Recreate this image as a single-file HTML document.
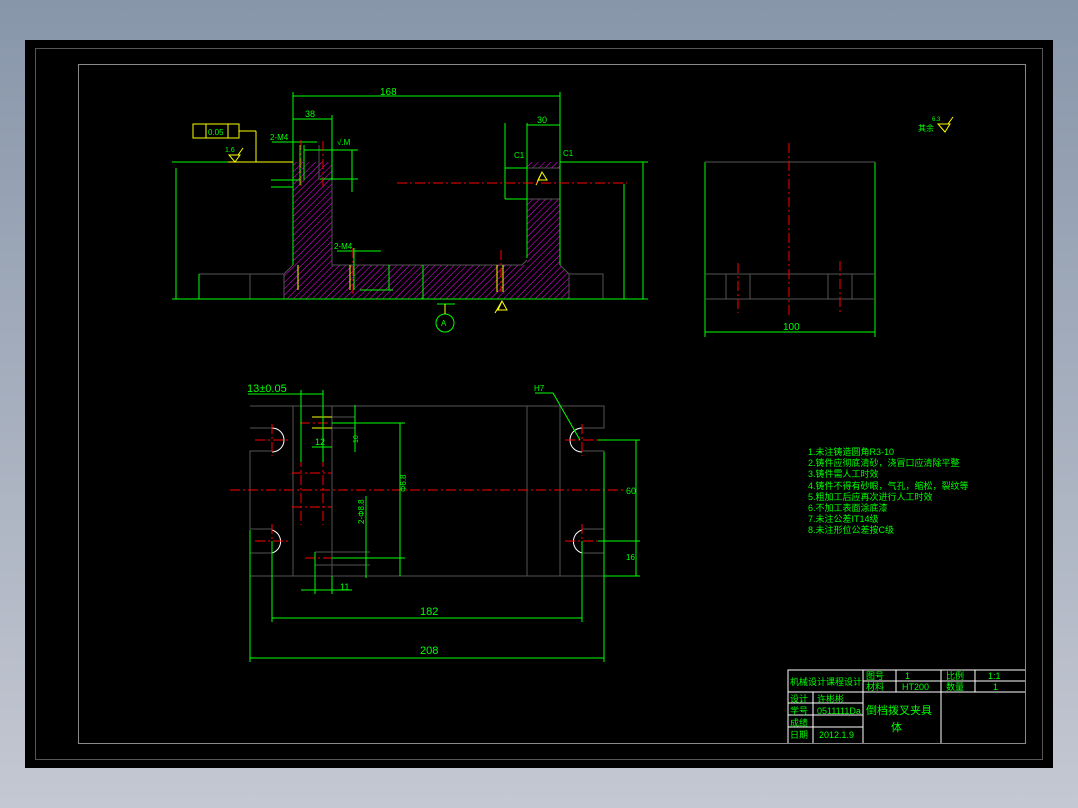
<!DOCTYPE html>
<html><head><meta charset="utf-8"><style>
html,body{margin:0;padding:0;width:1078px;height:808px;overflow:hidden;background:linear-gradient(#8896aa,#c4c8d2);}
svg{position:absolute;left:0;top:0;}
text{font-family:"Liberation Sans","Noto Sans CJK SC",sans-serif;fill:#00ff00;}
</style></head><body>
<svg width="1078" height="808" viewBox="0 0 1078 808">
<defs>
<pattern id="h" patternUnits="userSpaceOnUse" width="4.5" height="4.5" patternTransform="rotate(45)">
<line x1="0" y1="0" x2="0" y2="4.5" stroke="#ff00ff" stroke-width="1"/>
</pattern>
</defs>
<rect x="25" y="40" width="1028" height="728" fill="#000"/>
<rect x="35.5" y="48.5" width="1007" height="711" fill="none" stroke="#555" stroke-width="1"/>
<rect x="78.5" y="64.5" width="947" height="679" fill="none" stroke="#888" stroke-width="1"/>

<!-- FRONT VIEW -->
<g>
<path d="M293 162 H332 V265 H527 V199 H560 V265 L569 274 V299 H284 V274 L293 265 Z" fill="url(#h)"/>
<rect x="527" y="162" width="33" height="6" fill="url(#h)"/>
<g stroke="#555" fill="none" stroke-width="1">
<path d="M332 168 V265 H522 L527 260"/>
<path d="M560 265 L569 274 H603 V299"/>
<path d="M293 265 L284 274 H199"/>
<line x1="250" y1="274" x2="250" y2="299"/>
<line x1="569" y1="274" x2="569" y2="299"/>
<line x1="284" y1="274" x2="284" y2="299"/>
<line x1="527" y1="168" x2="560" y2="168"/>
<line x1="527" y1="199" x2="560" y2="199"/>
<line x1="319" y1="145" x2="319" y2="180"/>
</g>
<g stroke="#00ff00" fill="none" stroke-width="1">
<line x1="172" y1="162" x2="293" y2="162"/>
<line x1="560" y1="162" x2="648" y2="162"/>
<line x1="172" y1="299" x2="648" y2="299"/>
<line x1="293" y1="92" x2="293" y2="265"/>
<line x1="560" y1="92" x2="560" y2="265"/>
<line x1="527" y1="123" x2="527" y2="258"/>
<line x1="293" y1="96" x2="560" y2="96"/>
<line x1="293" y1="119" x2="332" y2="119"/>
<line x1="332" y1="115" x2="332" y2="180"/>
<line x1="527" y1="125" x2="560" y2="125"/>
<line x1="176" y1="168" x2="176" y2="299"/>
<line x1="643" y1="162" x2="643" y2="299"/>
<line x1="624" y1="184" x2="624" y2="299"/>
<line x1="199" y1="274" x2="199" y2="299"/>
<line x1="271" y1="187" x2="293" y2="187"/>
<line x1="271" y1="180" x2="300" y2="180"/>
<line x1="272" y1="142" x2="317" y2="142"/>
<line x1="304" y1="150" x2="358" y2="150"/>
<line x1="320" y1="179" x2="358" y2="179"/>
<line x1="352" y1="150" x2="352" y2="192"/>
<line x1="505" y1="168" x2="527" y2="168"/>
<line x1="505" y1="199" x2="527" y2="199"/>
<line x1="505" y1="123" x2="505" y2="199"/>
<line x1="337" y1="251" x2="381" y2="251"/>
<line x1="360" y1="290" x2="393" y2="290"/>
<line x1="389" y1="265" x2="389" y2="290"/>
<line x1="423" y1="265" x2="423" y2="299"/>
<line x1="300" y1="145" x2="300" y2="185"/>
<line x1="304" y1="145" x2="304" y2="180"/>
<line x1="354" y1="248" x2="354" y2="290"/>
<circle cx="445" cy="323" r="9"/>
<line x1="437" y1="304" x2="455" y2="304"/>
<line x1="705" y1="162" x2="705" y2="337"/>
<line x1="875" y1="162" x2="875" y2="337"/>
<line x1="705" y1="332" x2="875" y2="332"/>
</g>
<g stroke="#ffff00" fill="none" stroke-width="1">
<rect x="193" y="124" width="46" height="14"/>
<line x1="206" y1="124" x2="206" y2="138"/>
<line x1="228" y1="124" x2="228" y2="138"/>
<line x1="239" y1="131" x2="256" y2="131"/>
<line x1="256" y1="131" x2="256" y2="162"/>
<line x1="228" y1="162" x2="293" y2="162"/>
<path d="M229 155 H240 L235 162 Z M238 155 L243 148"/>
<line x1="298" y1="265" x2="298" y2="290"/>
<line x1="350" y1="265" x2="350" y2="290"/>
<line x1="497" y1="265" x2="497" y2="292"/>
<line x1="503" y1="265" x2="503" y2="292"/>
<path d="M538 180 L542 172 L547 180 Z M536 185 L542 172"/>
<path d="M498 310 L502 301 L507 310 Z M495 313 L502 301"/>
<path d="M938 124 H950 L945 132 Z M948 124 L953 117"/>
<line x1="445" y1="304" x2="445" y2="314"/>
</g>
<g stroke="#ff0000" fill="none" stroke-width="1" stroke-dasharray="10 3 2 3">
<line x1="397" y1="183" x2="627" y2="183"/>
<line x1="301" y1="140" x2="301" y2="190"/>
<line x1="323" y1="141" x2="323" y2="187"/>
<line x1="353" y1="248" x2="353" y2="296"/>
<line x1="501" y1="250" x2="501" y2="292"/>
</g>
<text x="380" y="95" font-size="10">168</text>
<text x="305" y="117" font-size="9">38</text>
<text x="537" y="123" font-size="9">30</text>
<text x="270" y="140" font-size="8">2-M4</text>
<text x="337" y="145" font-size="8">√.M</text>
<text x="208" y="135" font-size="8">0.05</text>
<text x="225" y="152" font-size="7">1.6</text>
<text x="334" y="249" font-size="8">2-M4</text>
<text x="514" y="158" font-size="8">C1</text>
<text x="563" y="156" font-size="8">C1</text>
<text x="918" y="131" font-size="8">其余</text>
<text x="932" y="121" font-size="6">6.3</text>
<text x="441" y="326" font-size="8">A</text>
<text x="783" y="330" font-size="10">100</text>
</g>

<!-- SIDE VIEW -->
<g stroke="#555" fill="none">
<line x1="705" y1="162" x2="875" y2="162"/>
<line x1="705" y1="274" x2="875" y2="274"/>
<line x1="705" y1="299" x2="875" y2="299"/>
<line x1="726" y1="274" x2="726" y2="299"/>
<line x1="750" y1="274" x2="750" y2="299"/>
<line x1="828" y1="274" x2="828" y2="299"/>
<line x1="852" y1="274" x2="852" y2="299"/>
</g>
<g stroke="#ff0000" stroke-dasharray="10 3 2 3">
<line x1="789" y1="143" x2="789" y2="318"/>
<line x1="738" y1="263" x2="738" y2="313"/>
<line x1="840" y1="261" x2="840" y2="313"/>
</g>

<!-- PLAN VIEW -->
<g stroke="#555" fill="none">
<path d="M250 406 H604 V428 H582 M582 451 H604 V529 H582 M582 553 H604 V576 H250 V553 H272 M272 529 H250 V451 H272 M272 428 H250 Z"/>
<line x1="293" y1="406" x2="293" y2="576"/>
<line x1="332" y1="406" x2="332" y2="576"/>
<line x1="527" y1="406" x2="527" y2="576"/>
<line x1="560" y1="406" x2="560" y2="576"/>
<line x1="312" y1="417" x2="355" y2="417"/>
<line x1="312" y1="428" x2="355" y2="428"/>
<line x1="315" y1="552" x2="370" y2="552"/>
<line x1="315" y1="565" x2="370" y2="565"/>
</g>
<g stroke="#fff" fill="none">
<path d="M272 428 A12 12 0 0 1 272 452"/>
<path d="M272 530 A12 12 0 0 1 272 553"/>
<path d="M582 428 A12 12 0 0 0 582 452"/>
<path d="M582 530 A12 12 0 0 0 582 553"/>
</g>
<g stroke="#ffff00"><line x1="312" y1="417" x2="332" y2="417"/><line x1="312" y1="428" x2="332" y2="428"/></g>
<g stroke="#ff0000" stroke-dasharray="10 3 2 3">
<line x1="230" y1="490" x2="625" y2="490"/>
<line x1="255" y1="440" x2="290" y2="440"/>
<line x1="255" y1="541" x2="290" y2="541"/>
<line x1="565" y1="440" x2="600" y2="440"/>
<line x1="565" y1="541" x2="600" y2="541"/>
<line x1="272" y1="424" x2="272" y2="456"/>
<line x1="272" y1="524" x2="272" y2="557"/>
<line x1="582" y1="424" x2="582" y2="456"/>
<line x1="582" y1="524" x2="582" y2="557"/>
<line x1="300" y1="423" x2="355" y2="423"/>
<line x1="305" y1="558" x2="345" y2="558"/>
<line x1="301" y1="457" x2="301" y2="525"/>
<line x1="323" y1="457" x2="323" y2="525"/>
<line x1="292" y1="473" x2="332" y2="473"/>
<line x1="292" y1="507" x2="332" y2="507"/>
</g>
<g stroke="#00ff00" fill="none">
<line x1="248" y1="394" x2="323" y2="394"/>
<line x1="301" y1="390" x2="301" y2="462"/>
<line x1="323" y1="390" x2="323" y2="462"/>
<line x1="312" y1="447" x2="332" y2="447"/>
<line x1="355" y1="405" x2="355" y2="452"/>
<line x1="332" y1="423" x2="405" y2="423"/>
<line x1="332" y1="558" x2="405" y2="558"/>
<line x1="400" y1="423" x2="400" y2="576"/>
<line x1="366" y1="496" x2="366" y2="578"/>
<line x1="301" y1="590" x2="352" y2="590"/>
<line x1="315" y1="552" x2="315" y2="594"/>
<line x1="332" y1="576" x2="332" y2="594"/>
<line x1="272" y1="541" x2="272" y2="622"/>
<line x1="582" y1="541" x2="582" y2="622"/>
<line x1="272" y1="618" x2="582" y2="618"/>
<line x1="250" y1="530" x2="250" y2="662"/>
<line x1="604" y1="452" x2="604" y2="662"/>
<line x1="250" y1="658" x2="604" y2="658"/>
<line x1="598" y1="440" x2="640" y2="440"/>
<line x1="598" y1="541" x2="640" y2="541"/>
<line x1="604" y1="576" x2="640" y2="576"/>
<line x1="636" y1="440" x2="636" y2="576"/>
<line x1="535" y1="393" x2="553" y2="393"/>
<line x1="553" y1="393" x2="580" y2="440"/>
</g>
<text x="247" y="392" font-size="11">13±0.05</text>
<text x="315" y="445" font-size="9">12</text>
<text x="340" y="590" font-size="9">11</text>
<text x="420" y="615" font-size="11">182</text>
<text x="420" y="654" font-size="11">208</text>
<text x="534" y="391" font-size="8">H7</text>
<text x="392" y="498" font-size="8" transform="rotate(-90 396 488)">Φ6.8</text>
<text x="356" y="524" font-size="8" transform="rotate(-90 360 520)">2-Φ8.8</text>
<text x="349" y="446" font-size="7" transform="rotate(-90 352 440)">10</text>
<text x="626" y="494" font-size="9">60</text>
<text x="626" y="560" font-size="8">16</text>

<!-- NOTES -->
<g font-size="9">
<text x="808" y="455">1.未注铸造圆角R3-10</text>
<text x="808" y="466">2.铸件应彻底清砂，浇冒口应清除平整</text>
<text x="808" y="477">3.铸件需人工时效</text>
<text x="808" y="489">4.铸件不得有砂眼，气孔，缩松，裂纹等</text>
<text x="808" y="500">5.粗加工后应再次进行人工时效</text>
<text x="808" y="511">6.不加工表面涂底漆</text>
<text x="808" y="522">7.未注公差IT14级</text>
<text x="808" y="533">8.未注形位公差按C级</text>
</g>

<!-- TITLE BLOCK -->
<g stroke="#fff" fill="none" stroke-width="1">
<path d="M788 743 V670 H1025 M788 692 H1025 M863 670 V743 M896 670 V692 M941 670 V743 M975 670 V692 M863 681 H1025 M788 703 H863 M788 715 H863 M788 727 H863 M813 692 V743"/>
</g>
<g font-size="9">
<text x="790" y="685">机械设计课程设计</text>
<text x="866" y="679">图号</text><text x="905" y="679">1</text>
<text x="946" y="679">比例</text><text x="988" y="679">1:1</text>
<text x="866" y="690">材料</text><text x="902" y="690">HT200</text>
<text x="946" y="690">数量</text><text x="993" y="690">1</text>
<text x="790" y="702">设计</text><text x="817" y="702">许彬彬</text>
<text x="790" y="714">学号</text><text x="817" y="714">0511111Da</text>
<text x="790" y="726">成绩</text>
<text x="790" y="738">日期</text><text x="819" y="738">2012.1.9</text>
</g>
<text x="866" y="714" font-size="11">倒档拨叉夹具</text>
<text x="891" y="731" font-size="11">体</text>
</svg>
</body></html>
